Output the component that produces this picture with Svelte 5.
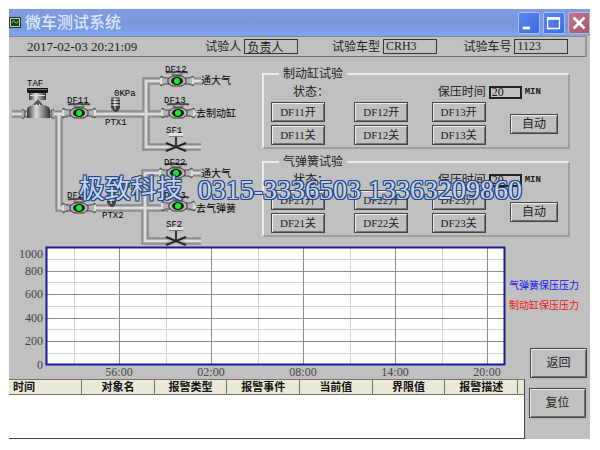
<script>
	let operator = $state('负责人');
	let carModel = $state('CRH3');
	let carNumber = $state('1123');

	let panels = $state([
		{ id: 'brake', title: '制动缸试验', time: '20', valves: ['DF11', 'DF12', 'DF13'] },
		{ id: 'spring', title: '气弹簧试验', time: '20', valves: ['DF21', 'DF22', 'DF23'] }
	]);

	const pipes = [
		'M12 115H30',
		'M48 115H68',
		'M59 115V209H68',
		'M91 115H168',
		'M91 209H168',
		'M165 82H146V148H168',
		'M165 174H145V242H168',
		'M188 82H201',
		'M188 114H196',
		'M188 174H201',
		'M188 208H196',
		'M184 148H201',
		'M184 242H201'
	];

	const valves = [
		{ x: 79, y: 114 },
		{ x: 79, y: 209 },
		{ x: 177, y: 82 },
		{ x: 178, y: 114 },
		{ x: 176, y: 174 },
		{ x: 178, y: 207 }
	];

	const stopValves = [
		{ x: 176, y: 148 },
		{ x: 176, y: 242 }
	];

	const sensors = [
		{ x: 115, y: 99 },
		{ x: 111, y: 194 }
	];

	const labels = [
		{ x: 27, y: 87, text: 'TAF' },
		{ x: 67, y: 104, text: 'DF11' },
		{ x: 67, y: 199, text: 'DF21' },
		{ x: 165, y: 73, text: 'DF12' },
		{ x: 164, y: 104, text: 'DF13' },
		{ x: 166, y: 134, text: 'SF1' },
		{ x: 164, y: 166, text: 'DF22' },
		{ x: 164, y: 199, text: 'DF23' },
		{ x: 166, y: 228, text: 'SF2' },
		{ x: 114, y: 97, text: '0KPa' },
		{ x: 114, y: 191, text: '0KPa' },
		{ x: 105, y: 126, text: 'PTX1' },
		{ x: 102, y: 219, text: 'PTX2' }
	];

	const outlets = [
		{ x: 201, y: 85, text: '通大气' },
		{ x: 196, y: 118, text: '去制动缸' },
		{ x: 201, y: 178, text: '通大气' },
		{ x: 196, y: 213, text: '去气弹簧' }
	];

	const yTicks = [
		{ y: 254, text: '1000' },
		{ y: 271, text: '800' },
		{ y: 294, text: '600' },
		{ y: 318, text: '400' },
		{ y: 341, text: '200' },
		{ y: 365, text: '0' }
	];
	const xTicks = ['56:00', '02:00', '08:00', '14:00', '20:00'];
	const minorRows = [259, 282, 306, 329, 353];
	const majorRows = [271, 294, 318, 341];

	const columns = ['时间', '对象名', '报警类型', '报警事件', '当前值', '界限值', '报警描述'];
</script>

<div class="page">
	<main class="window">
		<header class="title-bar">
			<svg class="app-icon" viewBox="0 0 12 11" aria-hidden="true">
				<rect width="12" height="11" fill="#26331f" />
				<rect x="1.5" y="1.5" width="9" height="8" fill="#123d18" stroke="#c9cfb4" />
				<path d="M3 6C4 3 5 3 6 5S8 7 9 4" fill="none" stroke="#8fe08c" />
			</svg>
			<h1>微车测试系统</h1>
			<div class="window-buttons">
				<button type="button" aria-label="最小化">
					<svg viewBox="0 0 22 22"><path d="M4 16.5h8" stroke="#fff" stroke-width="3" /></svg>
				</button>
				<button type="button" aria-label="最大化">
					<svg viewBox="0 0 22 22">
						<path d="M4 5.5h13v11.5H4z" fill="none" stroke="#fff" stroke-width="1.5" />
						<path d="M3.5 6h14" stroke="#fff" stroke-width="3" />
					</svg>
				</button>
				<button type="button" class="close" aria-label="关闭">
					<svg viewBox="0 0 22 22">
						<path d="M5 5l12 12M17 5L5 17" stroke="#fff" stroke-width="3" />
					</svg>
				</button>
			</div>
		</header>

		<section class="info-bar">
			<time>2017-02-03 20:21:09</time>
			<label>试验人 <input bind:value={operator} /></label>
			<label>试验车型 <input bind:value={carModel} /></label>
			<label>试验车号 <input bind:value={carNumber} /></label>
		</section>

		<section class="workspace">
			<svg class="diagram" viewBox="9 58 253 189" role="img" aria-label="气路图">
				<defs>
					<linearGradient id="metal">
						<stop offset="0" stop-color="#333" />
						<stop offset="0.4" stop-color="#ddd" />
						<stop offset="1" stop-color="#333" />
					</linearGradient>
				</defs>

				{#each pipes as d}
					<path class="pipe-edge" {d} />
				{/each}
				{#each pipes as d}
					<path class="pipe-core" {d} />
				{/each}
				{#each pipes as d}
					<path class="pipe-shine" {d} />
				{/each}

				<!-- TAF regulator -->
				<rect x="29" y="94" width="17" height="7" fill="url(#metal)" />
				<path d="M30 96.5h15" stroke="#ddd" />
				<rect x="27" y="89" width="21" height="5" rx="1" fill="#111" />
				<path d="M28 90.5h19" stroke="#777" />
				<path d="M38 101v6M34 106l4-4 4 4" stroke="#555" stroke-width="2" fill="#ddd" />
				<path d="M27 119v-9q2-4 8-4h6q7 0 9 4v9z" fill="url(#metal)" />
				<path d="M22 110l3 2v6l-3 2M54 110l-3 2v6l3 2" fill="#aaa" stroke="#444" />

				{#each valves as v}
					<g transform="translate({v.x} {v.y})">
						<path d="M-16-5q3 3 8 2v6q-5-1-8 2zM16-5q-3 3-8 2v6q5-1 8 2z" fill="#b4b4b4" stroke="#4a4a4a" />
						<path d="M-16-3v6M16-3v6" stroke="#ddd" stroke-width="2" />
						<path d="M-11-8.500q5-1 7 0l4-1 4 1q3-1 7 0" fill="none" stroke="#444" stroke-width="2" />
						<path d="M-6-7h12l-3 3h-6z" fill="#777" />
						<path d="M-9-2l4-3H5l4 3v4L5 5H-5l-4-3z" fill="#b4b4b4" stroke="#333" />
						<ellipse rx="6" ry="4" fill="#161616" />
						<circle r="3" fill="#10f020" />
					</g>
				{/each}

				{#each stopValves as v}
					<g transform="translate({v.x} {v.y})">
						<path d="M-7-2H7M-7 1H7" stroke="#ccc" stroke-width="2" />
						<path d="M-10-4L0 0L10-4M-10 4L0 0L10 4" fill="none" stroke="#222" stroke-width="2" />
						<path d="M0-11V0" stroke="#333" stroke-width="2" />
						<rect x="-7" y="-14" width="14" height="3" fill="#e4e1d6" />
						<path d="M-7-10.500H7" stroke="#777" />
					</g>
				{/each}

				{#each sensors as s}
					<g transform="translate({s.x} {s.y})">
						<rect x="-3" y="0" width="7" height="10" fill="#bbb" stroke="#333" />
						<path d="M-4 2.500h9M-4 5.500h9M-4 8.500h9" stroke="#333" />
						<path d="M-4 9h9q-1 5-4 5t-5-5z" fill="#444" />
						<path d="M0 0v11" stroke="#eee" />
					</g>
				{/each}

				{#each labels as l}
					<text class="tag" x={l.x} y={l.y}>{l.text}</text>
				{/each}
				{#each outlets as o}
					<text class="outlet" x={o.x} y={o.y}>{o.text}</text>
				{/each}
			</svg>

			<div class="panels">
				{#each panels as panel (panel.id)}
					<fieldset>
						<legend>{panel.title}</legend>
						<div class="controls">
							<span class="status">状态：</span>
							<div class="hold-time">
								<label for="time-{panel.id}">保压时间</label>
								<input id="time-{panel.id}" bind:value={panel.time} />
								<span class="unit">MIN</span>
							</div>
							{#each panel.valves as valve}
								<button type="button" class="btn">{valve}开</button>
							{/each}
							<button type="button" class="btn auto">自动</button>
							{#each panel.valves as valve}
								<button type="button" class="btn">{valve}关</button>
							{/each}
						</div>
					</fieldset>
				{/each}
			</div>
		</section>

		<section class="trend">
			<svg class="chart" viewBox="9 246 497 133" role="img" aria-label="压力曲线">
				<rect x="46" y="248" width="458" height="117" fill="#fff" />
				{#each minorRows as y}
					<path class="minor" d="M46 {y + 0.5}H504" />
				{/each}
				{#each xTicks as _, i}
					<path class="minor" d="M{74.5 + i * 92} 248V365" />
				{/each}
				{#each majorRows as y}
					<path class="major" d="M46 {y + 0.5}H504" />
				{/each}
				{#each xTicks as tick, i}
					<path class="major" d="M{119.5 + i * 92} 248V365" />
					<text x={119 + i * 92} y="376" text-anchor="middle">{tick}</text>
				{/each}
				<rect x="46.5" y="247.5" width="458" height="117" class="frame" />
				{#each yTicks as tick}
					<text x="43" y={tick.y + 4} text-anchor="end">{tick.text}</text>
				{/each}
			</svg>
			<div class="trend-side">
				<ul>
					<li class="blue">气弹簧保压压力</li>
					<li class="red">制动缸保压压力</li>
				</ul>
				<button type="button" class="btn large">返回</button>
			</div>
		</section>

		<section class="alarms">
			<div class="alarm-list">
				<table>
					<thead>
						<tr>
							{#each columns as column}
								<th>{column}</th>
							{/each}
							<td class="rest"></td>
						</tr>
					</thead>
				</table>
			</div>
			<div class="alarm-side">
				<button type="button" class="btn large">复位</button>
			</div>
		</section>

		<p class="contact"><span>极致科技</span><span class="phone">0315-3336503 13363209860</span></p>
	</main>
</div>

<style>
	:global(body) {
		margin: 0;
		background: #fff;
	}

	.page {
		padding: 9px 10px 11px 9px;
		font-family: 'Liberation Serif', 'Noto Sans CJK SC', serif;
		font-size: 12px;
		line-height: 14px;
		color: #222;
	}

	.window {
		position: relative;
		background: #c0c0c0;
	}

	button,
	input {
		font: inherit;
		color: inherit;
		box-sizing: border-box;
		border-radius: 0;
		margin: 0;
	}

	.title-bar {
		display: flex;
		align-items: center;
		height: 27px;
		background: linear-gradient(#7d9ce2, #7896de 60%, #7ea5ef);
	}

	.app-icon {
		width: 12px;
		height: 11px;
		margin-right: 4px;
	}

	h1 {
		flex: 1;
		margin: 0;
		font-size: 16px;
		line-height: 20px;
		font-weight: 500;
		color: #dfe7fa;
	}

	.window-buttons {
		display: flex;
		gap: 3px;
	}

	.window-buttons button {
		width: 22px;
		height: 22px;
		padding: 0;
		border: 1px solid #a9bff3;
		border-radius: 2px;
		background: linear-gradient(135deg, #5f86ea, #3a6be6);
	}

	.window-buttons .close {
		border-color: #cdb0cd;
		background: linear-gradient(135deg, #b9788f, #a9566b);
	}

	.window-buttons svg {
		display: block;
		width: 100%;
	}

	.info-bar {
		display: grid;
		grid-template-columns: 179fr 127fr 132fr 122fr;
		align-items: center;
		height: 19px;
		margin-right: 3px;
		padding-left: 18px;
		border-top: 1px solid #8a887e;
		border-right: 2px solid #96948a;
		border-bottom: 1px solid #77756b;
	}

	time {
		font-size: 13px;
	}

	.info-bar label {
		display: flex;
		align-items: center;
		gap: 3px;
	}

	.info-bar input {
		width: 54px;
		height: 15px;
		padding: 0 2px;
		border: 1px solid #333;
		background: #c0c0c0;
	}

	.workspace {
		display: grid;
		grid-template-columns: 253fr 308fr 20fr;
	}

	.diagram,
	.chart {
		display: block;
		width: 100%;
	}

	.pipe-edge,
	.pipe-core,
	.pipe-shine {
		fill: none;
	}

	.pipe-edge {
		stroke: #707070;
		stroke-width: 7;
	}

	.pipe-core {
		stroke: #b0b0b0;
		stroke-width: 5;
	}

	.pipe-shine {
		stroke: #dcdcdc;
		stroke-width: 2;
	}

	.tag {
		font-family: 'Liberation Mono', monospace;
		font-size: 9px;
	}

	.outlet {
		font-size: 10px;
	}

	.panels {
		display: flex;
		flex-direction: column;
		gap: 6px;
		padding-top: 10px;
	}

	fieldset {
		min-width: 0;
		margin: 0;
		padding: 0 10px 2px 7px;
		border: 2px solid;
		border-color: #ecebe5 #a19f95 #a19f95 #ecebe5;
	}

	legend {
		margin-left: 8px;
		padding: 0 4px;
	}

	.controls {
		display: grid;
		grid-template-columns: 84fr 78fr 79fr 48fr;
		grid-template-rows: 18px 20px 20px;
		row-gap: 3px;
	}

	.status {
		grid-column: 1 / 3;
		align-self: end;
		padding-left: 22px;
	}

	.hold-time {
		grid-column: 3 / 5;
		align-self: end;
		display: flex;
		align-items: center;
		gap: 3px;
		padding-left: 6px;
		white-space: nowrap;
	}

	.hold-time input {
		width: 33px;
		height: 13px;
		padding: 0 1px;
		border: 2px solid #222;
		line-height: 9px;
		background: #c0c0c0;
	}

	.unit {
		font-family: 'Liberation Mono', monospace;
		font-size: 9px;
		font-weight: bold;
	}

	.btn {
		width: 54px;
		padding: 0;
		border: 1px solid #444;
		background: #c0c0c0;
		box-shadow:
			inset 1px 1px #f0f0ec,
			inset -1px -1px #77756b;
		font-size: 11px;
		white-space: nowrap;
	}

	.auto {
		grid-column: 4;
		grid-row: 2 / 4;
		align-self: center;
		width: 48px;
		height: 20px;
		font-size: 12px;
	}

	.large {
		width: 57px;
		height: 30px;
		font-size: 12px;
	}

	.trend {
		display: grid;
		grid-template-columns: 497fr 84fr;
	}

	.chart text {
		font-size: 12px;
		fill: #444;
	}

	.minor {
		stroke: #d2d2d2;
	}

	.major {
		stroke: #8c8c8c;
	}

	.frame {
		fill: none;
		stroke: #1a1a9c;
		stroke-width: 2;
	}

	.trend-side {
		display: flex;
		flex-direction: column;
		justify-content: space-between;
		align-items: flex-end;
		padding: 30px 3px 1px 3px;
	}

	ul {
		align-self: stretch;
		margin: 0;
		padding: 0;
		list-style: none;
		font-size: 10px;
		line-height: 20px;
		white-space: nowrap;
	}

	.blue {
		color: #1414f0;
	}

	.red {
		color: #f01414;
	}

	.alarms {
		display: grid;
		grid-template-columns: 516fr 65fr;
	}

	.alarm-list {
		height: 58px;
		border: 1px solid #444;
		border-left: 0;
		border-top-color: #77756b;
		background: #fff;
	}

	table {
		width: 100%;
		table-layout: fixed;
		border-collapse: collapse;
	}

	th,
	.rest {
		height: 14px;
		padding: 0;
		background: #ebe8d8;
		border-bottom: 1px solid #77756b;
	}

	th {
		border-right: 1px solid #77756b;
		font-size: 11px;
		line-height: 13px;
		font-weight: bold;
		color: #111;
	}

	th:first-child {
		padding-left: 4px;
		text-align: left;
	}

	.rest {
		width: 6px;
	}

	.alarm-side {
		padding: 9px 4px 0 0;
		text-align: right;
	}

	.contact {
		position: absolute;
		top: 165px;
		left: 12%;
		display: flex;
		align-items: center;
		gap: 15px;
		margin: 0;
		font-size: 26px;
		line-height: 32px;
		color: #cbd2f0;
		white-space: nowrap;
		pointer-events: none;
		text-shadow:
			1px 0 #1d4a86,
			-1px 0 #1d4a86,
			0 1px #1d4a86,
			0 -1px #1d4a86,
			1px 1px #1d4a86,
			-1px -1px #1d4a86,
			1px -1px #1d4a86,
			-1px 1px #1d4a86;
	}

	.phone {
		font-size: 28px;
	}
</style>
